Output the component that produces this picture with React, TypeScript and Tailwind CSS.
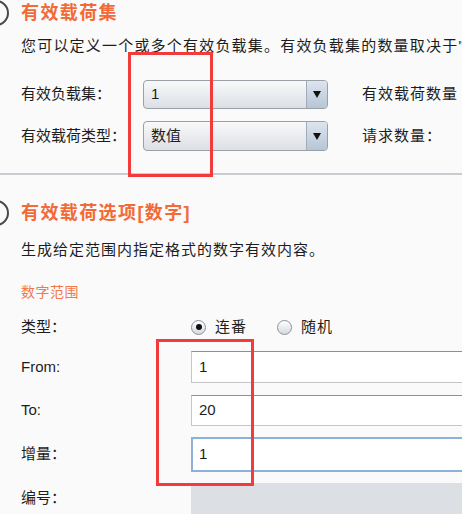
const FONT = "font-['Liberation_Sans','Noto_Sans_CJK_SC',sans-serif]";

function HelpCircle() {
  return <div className="ml-[-17px] mr-[12px] h-[26px] w-[26px] shrink-0 rounded-full border-2 border-[#4a4a4a]" />;
}

function Heading({ children }: { children: string }) {
  return (
    <div className="flex h-[26px] items-center">
      <HelpCircle />
      <h2 className="text-[18px] font-bold leading-[26px] tracking-[1.4px] text-[#f26a38]">{children}</h2>
    </div>
  );
}

function Select({ value }: { value: string }) {
  return (
    <div className="flex h-full w-[185px] overflow-hidden rounded-[4px] border border-[#9aa0a8] bg-linear-to-b from-[#f8f9fa] to-[#dcdfe4]">
      <div className="flex flex-1 items-center pl-[7px] text-[15px]">{value}</div>
      <div className="flex w-[21px] items-center justify-center border-l border-[#a2acb8] bg-linear-to-b from-[#dde5ee] to-[#b6c5d5]">
        <span className="h-0 w-0 border-x-[4px] border-t-[7px] border-x-transparent border-t-[#111]" />
      </div>
    </div>
  );
}

function Radio({ checked, label }: { checked?: boolean; label: string }) {
  return (
    <label className="flex items-center gap-[9px]">
      <span className="flex h-[15px] w-[15px] items-center justify-center rounded-full border border-[#8c9199] bg-linear-to-b from-[#ffffff] to-[#d5d9de]">
        {checked && <span className="h-[6px] w-[6px] rounded-full bg-[#111]" />}
      </span>
      <span className="text-[15px] tracking-[1px]">{label}</span>
    </label>
  );
}

function Field({ label, value, height, focused }: { label: string; value: string; height: string; focused?: boolean }) {
  return (
    <div className={`flex items-center ${height}`}>
      <span className="w-[170px] shrink-0 text-[15px]">{label}</span>
      <div
        className={
          focused
            ? 'flex h-full w-[300px] shrink-0 items-center border-2 border-[#8db1d9] bg-white pl-[6px] text-[15px]'
            : 'flex h-full w-[300px] shrink-0 items-center border border-[#c6c6c6] border-t-[#8f8f8f] bg-white pl-[7px] text-[15px]'
        }
      >
        {value}
      </div>
    </div>
  );
}

export default function App() {
  return (
    <div className={`relative h-[514px] w-[462px] overflow-hidden bg-[#fafafa] text-[#1d1d1d] ${FONT}`}>
      <section>
        <Heading>有效载荷集</Heading>
        <p className="mt-[10px] whitespace-nowrap pl-[21px] text-[15px] leading-[20px] tracking-[1.2px]">
          您可以定义一个或多个有效负载集。有效负载集的数量取决于"
        </p>
        <div className="mt-[24px] flex flex-col gap-[12px] pl-[21px]">
          <div className="flex h-[29px] items-center">
            <span className="w-[122px] shrink-0 text-[15px]">有效负载集：</span>
            <Select value="1" />
            <span className="ml-[34px] whitespace-nowrap text-[15px] tracking-[1px]">有效载荷数量</span>
          </div>
          <div className="flex h-[30px] items-center">
            <span className="w-[122px] shrink-0 text-[15px]">有效载荷类型：</span>
            <Select value="数值" />
            <span className="ml-[34px] whitespace-nowrap text-[15px] tracking-[1px]">请求数量：</span>
          </div>
        </div>
        <div className="mt-[22px] h-[2px] bg-[#c9ccd0]" />
      </section>

      <section className="mt-[25px]">
        <Heading>有效载荷选项[数字]</Heading>
        <p className="mt-[14px] whitespace-nowrap pl-[21px] text-[15px] leading-[20px] tracking-[1px]">
          生成给定范围内指定格式的数字有效内容。
        </p>
        <div className="mt-[22px] pl-[21px] text-[14px] leading-[20px] tracking-[0.5px] text-[#f3784a]">数字范围</div>
        <div className="mt-[15px] flex h-[20px] items-center pl-[21px]">
          <span className="w-[170px] shrink-0 text-[15px]">类型：</span>
          <div className="flex items-center gap-[30px]">
            <Radio checked label="连番" />
            <Radio label="随机" />
          </div>
        </div>
        <div className="mt-[14px] flex flex-col pl-[21px]">
          <Field label="From:" value="1" height="h-[32px]" />
          <div className="mt-[12px]">
            <Field label="To:" value="20" height="h-[31px]" />
          </div>
          <div className="mt-[11px]">
            <Field label="增量：" value="1" height="h-[35px]" focused />
          </div>
          <div className="mt-[11px] flex h-[40px] items-start">
            <span className="w-[170px] shrink-0 pt-[4px] text-[15px]">编号：</span>
            <div className="h-full w-[300px] shrink-0 bg-[#dcdfe3]" />
          </div>
        </div>
      </section>

      <div className="pointer-events-none absolute left-[128px] top-[52px] h-[125px] w-[85px] border-[3px] border-[#f23b3b]" />
      <div className="pointer-events-none absolute left-[156px] top-[339px] h-[147px] w-[98px] border-[3px] border-[#f23b3b]" />
    </div>
  );
}
